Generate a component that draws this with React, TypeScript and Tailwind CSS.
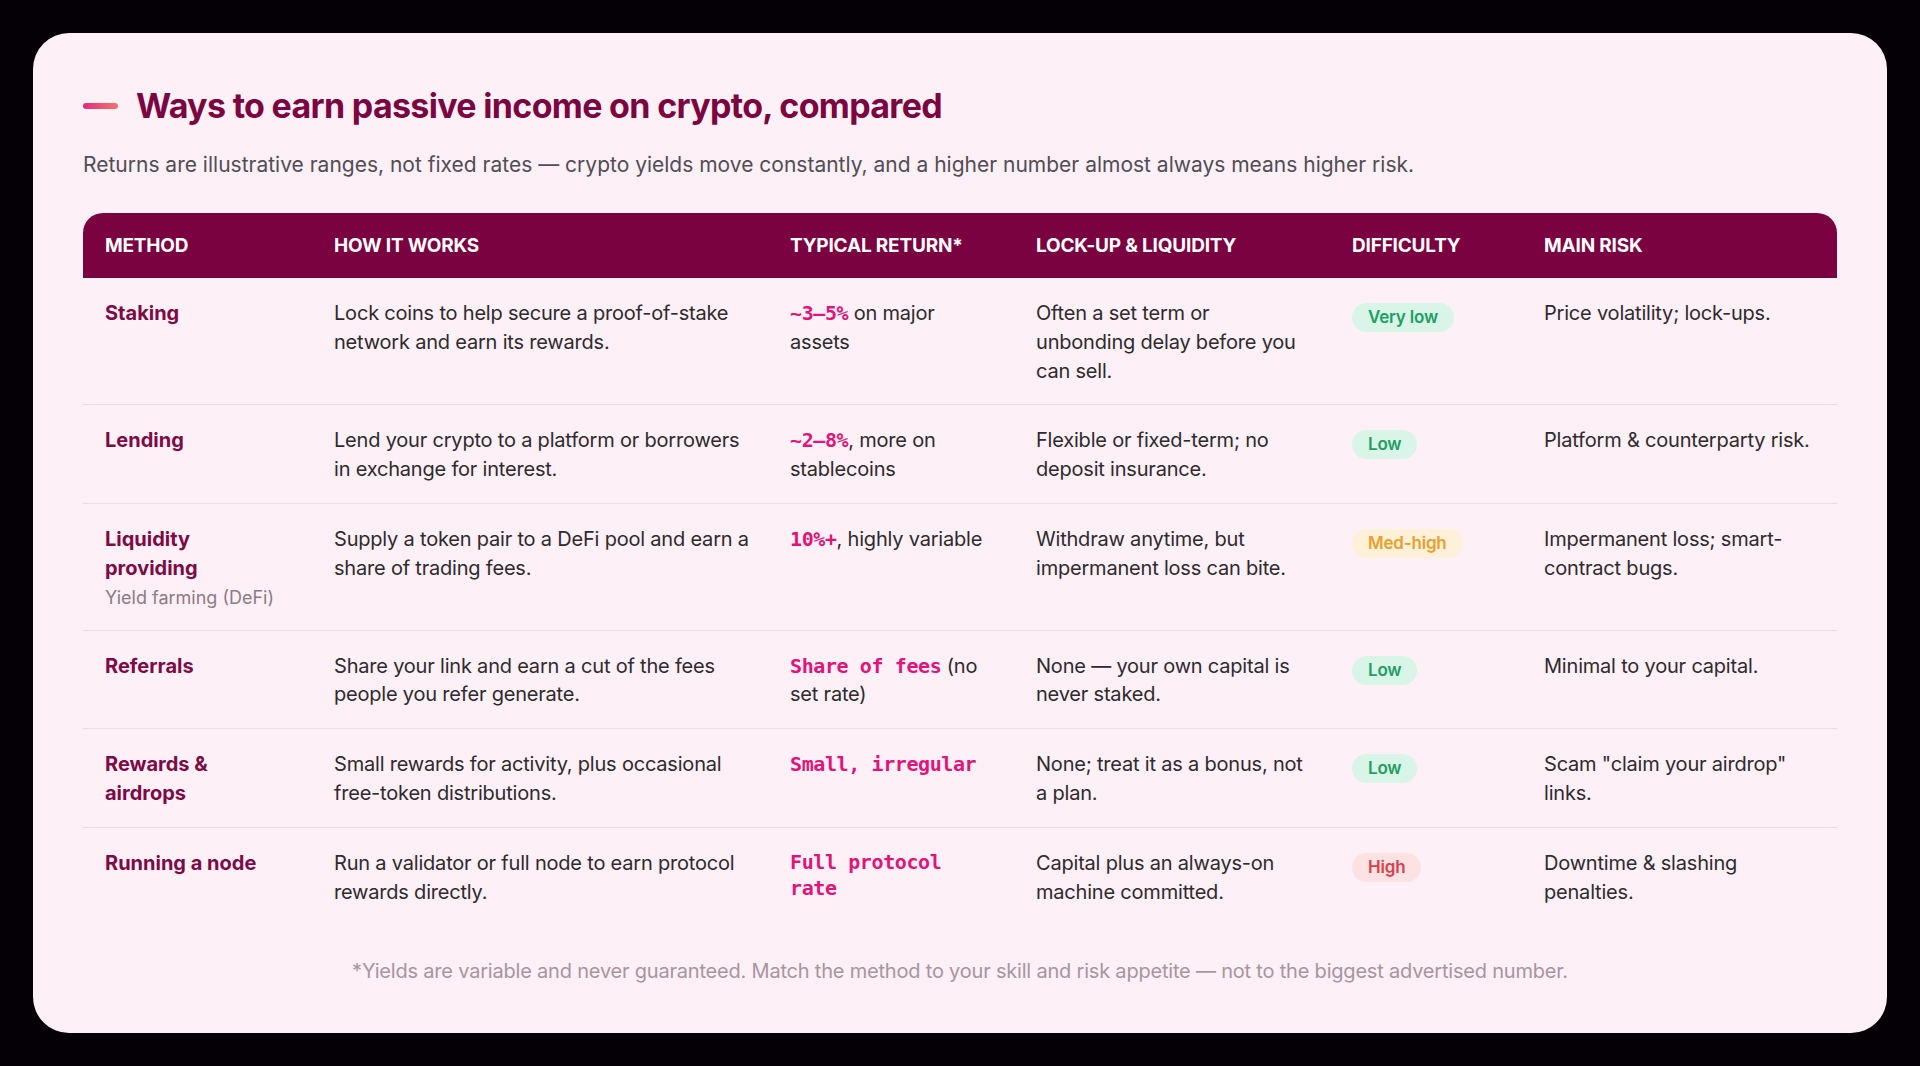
import React from "react";

type Seg = { t: string; m?: boolean };
type Line = Seg[];

type Row = {
  method: string[];
  sub?: string;
  how: string[];
  ret: Line[];
  lock: string[];
  diff: "Very low" | "Low" | "Med-high" | "High";
  risk: string[];
};

const rows: Row[] = [
  {
    method: ["Staking"],
    how: ["Lock coins to help secure a proof-of-stake", "network and earn its rewards."],
    ret: [[{ t: "~3–5%", m: true }, { t: " on major" }], [{ t: "assets" }]],
    lock: ["Often a set term or", "unbonding delay before you", "can sell."],
    diff: "Very low",
    risk: ["Price volatility; lock-ups."],
  },
  {
    method: ["Lending"],
    how: ["Lend your crypto to a platform or borrowers", "in exchange for interest."],
    ret: [[{ t: "~2–8%", m: true }, { t: ", more on" }], [{ t: "stablecoins" }]],
    lock: ["Flexible or fixed-term; no", "deposit insurance."],
    diff: "Low",
    risk: ["Platform & counterparty risk."],
  },
  {
    method: ["Liquidity", "providing"],
    sub: "Yield farming (DeFi)",
    how: ["Supply a token pair to a DeFi pool and earn a", "share of trading fees."],
    ret: [[{ t: "10%+", m: true }, { t: ", highly variable" }]],
    lock: ["Withdraw anytime, but", "impermanent loss can bite."],
    diff: "Med-high",
    risk: ["Impermanent loss; smart-", "contract bugs."],
  },
  {
    method: ["Referrals"],
    how: ["Share your link and earn a cut of the fees", "people you refer generate."],
    ret: [[{ t: "Share of fees", m: true }, { t: " (no" }], [{ t: "set rate)" }]],
    lock: ["None — your own capital is", "never staked."],
    diff: "Low",
    risk: ["Minimal to your capital."],
  },
  {
    method: ["Rewards &", "airdrops"],
    how: ["Small rewards for activity, plus occasional", "free-token distributions."],
    ret: [[{ t: "Small, irregular", m: true }]],
    lock: ["None; treat it as a bonus, not", "a plan."],
    diff: "Low",
    risk: ['Scam "claim your airdrop"', "links."],
  },
  {
    method: ["Running a node"],
    how: ["Run a validator or full node to earn protocol", "rewards directly."],
    ret: [[{ t: "Full protocol", m: true }], [{ t: "rate", m: true }]],
    lock: ["Capital plus an always-on", "machine committed."],
    diff: "High",
    risk: ["Downtime & slashing", "penalties."],
  },
];

const mono = { fontFamily: "'DejaVu Sans Mono', monospace" };

function Lines({ lines }: { lines: string[] }) {
  return (
    <>
      {lines.map((l, i) => (
        <span key={i} className="block whitespace-nowrap">
          {l}
        </span>
      ))}
    </>
  );
}

function Badge({ level }: { level: Row["diff"] }) {
  const cls =
    level === "Very low" || level === "Low"
      ? "bg-[#d9f5e7] text-[#1f9e66]"
      : level === "Med-high"
      ? "bg-[#fff0d9] text-[#e8a02c]"
      : "bg-[#fde2e4] text-[#d8404c]";
  return (
    <span
      className={
        "inline-flex h-[29px] items-center rounded-full px-[16px] text-[17px] font-semibold leading-none " +
        cls
      }
    >
      {level}
    </span>
  );
}

export default function App() {
  const font = { fontFamily: "Inter, 'Noto Sans', sans-serif" };
  return (
    <div className="flex h-screen w-full bg-[#050005] p-[33px]" style={font}>
      <div className="flex flex-1 flex-col rounded-[36px] bg-[#fdf0f7] px-[50px] pt-[53px]">
        <div className="flex h-[40px] items-center gap-[18px]">
          <div className="h-[6px] w-[35px] rounded-full bg-gradient-to-r from-[#e02a78] to-[#f27070]" />
          <h1 className="whitespace-nowrap text-[34px] font-bold leading-[40px] tracking-[-0.02em] text-[#7a0540]">
            Ways to earn passive income on crypto, compared
          </h1>
        </div>
        <p className="mt-[25px] whitespace-nowrap text-[21px] leading-[28px] text-[#524d55]">
          Returns are illustrative ranges, not fixed rates — crypto yields move constantly, and a higher number almost always means higher risk.
        </p>

        <table className="mt-[34px] w-full table-fixed border-collapse text-left">
          <colgroup>
            <col className="w-[229px]" />
            <col className="w-[456px]" />
            <col className="w-[246px]" />
            <col className="w-[316px]" />
            <col className="w-[192px]" />
            <col className="w-[315px]" />
          </colgroup>
          <thead>
            <tr className="h-[65px] bg-[#7b0241] text-[19px] uppercase tracking-[-0.01em] text-white">
              <th className="rounded-tl-[20px] pl-[22px] pt-[2px] font-bold">Method</th>
              <th className="pl-[22px] pt-[2px] font-bold">How it works</th>
              <th className="pl-[22px] pt-[2px] font-bold">Typical return*</th>
              <th className="pl-[22px] pt-[2px] font-bold">Lock-up &amp; liquidity</th>
              <th className="pl-[22px] pt-[2px] font-bold">Difficulty</th>
              <th className="rounded-tr-[20px] pl-[22px] pt-[2px] font-bold">Main risk</th>
            </tr>
          </thead>
          <tbody className="text-[20px] leading-[28.8px] tracking-[-0.01em] text-[#2f2a2d]">
            {rows.map((r, i) => (
              <tr
                key={r.method.join(" ")}
                className={i < rows.length - 1 ? "border-b border-[#f2d9e5] align-top" : "align-top"}
              >
                <td className="pb-[19px] pl-[22px] pt-[21px]">
                  <div className="font-bold tracking-normal text-[#7d0a45]">
                    <Lines lines={r.method} />
                  </div>
                  {r.sub && (
                    <div className="mt-[2px] text-[18px] leading-[26px] tracking-normal text-[#8e7a85]">{r.sub}</div>
                  )}
                </td>
                <td className="pb-[19px] pl-[22px] pt-[21px]">
                  <Lines lines={r.how} />
                </td>
                <td className="pb-[19px] pl-[22px] pt-[21px]">
                  {r.ret.map((line, li) => {
                    const allMono = line.every((s) => s.m) && r.ret.length > 1;
                    return (
                      <span
                        key={li}
                        className={allMono ? "block whitespace-nowrap leading-[26px]" : "block whitespace-nowrap"}
                      >
                        {line.map((s, si) =>
                          s.m ? (
                            <span
                              key={si}
                              className="text-[20px] font-bold tracking-[-0.02em] text-[#e0157a]"
                              style={mono}
                            >
                              {s.t}
                            </span>
                          ) : (
                            <span key={si}>{s.t}</span>
                          )
                        )}
                      </span>
                    );
                  })}
                </td>
                <td className="pb-[19px] pl-[22px] pt-[21px]">
                  <Lines lines={r.lock} />
                </td>
                <td className="pb-[19px] pl-[22px] pt-[21px]">
                  <div className="pt-[3px]">
                    <Badge level={r.diff} />
                  </div>
                </td>
                <td className="pb-[19px] pl-[22px] pt-[21px]">
                  <Lines lines={r.risk} />
                </td>
              </tr>
            ))}
          </tbody>
        </table>

        <p className="mt-[32px] whitespace-nowrap text-center text-[20px] leading-[28px] tracking-[-0.01em] text-[#a8959f]">
          *Yields are variable and never guaranteed. Match the method to your skill and risk appetite — not to the biggest advertised number.
        </p>
      </div>
    </div>
  );
}
